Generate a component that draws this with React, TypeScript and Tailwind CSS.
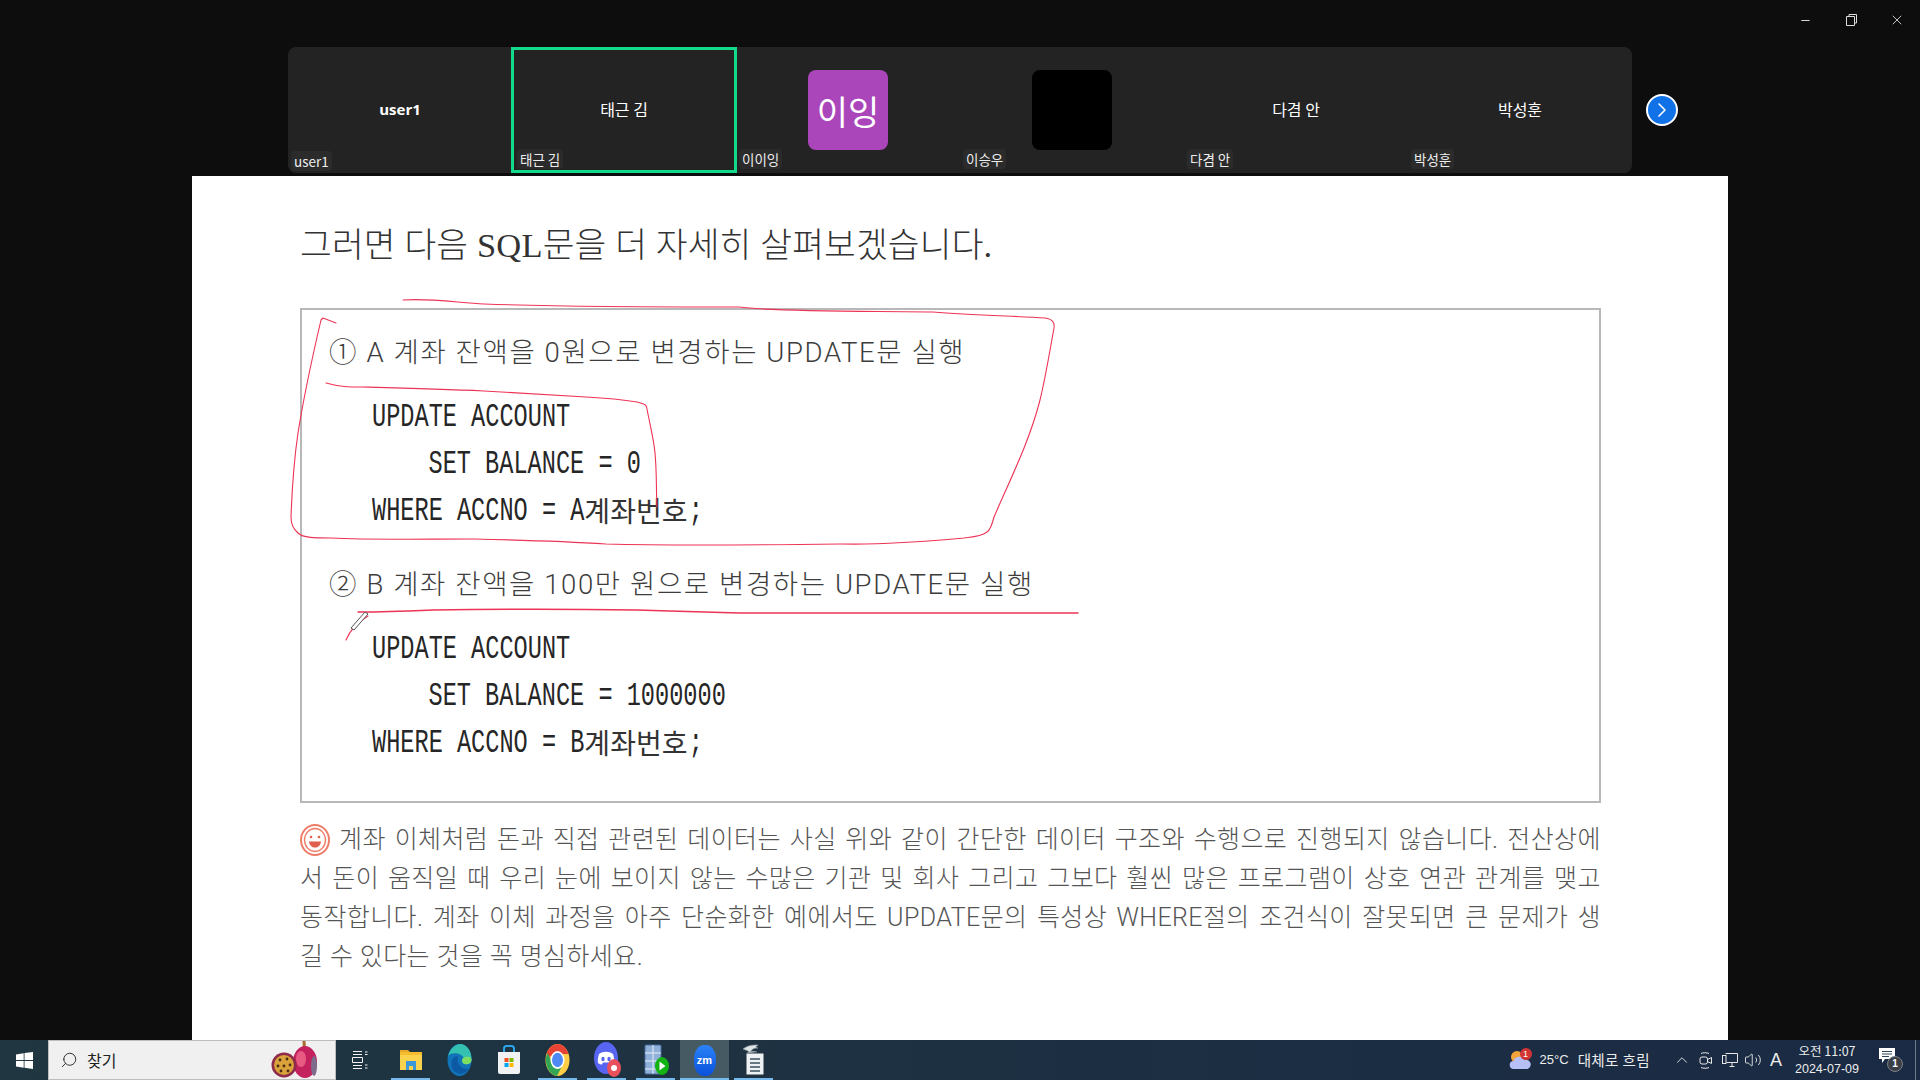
import type { ReactNode } from 'react';
import { ChevronRight, ChevronUp, Minus, Search, Volume2, X } from 'lucide-react';

const tiles = [
  { name: 'user1', label: 'user1', bold: true },
  { name: '태근 김', label: '태근 김', active: true },
  { label: '이이잉', avatar: '이잉', color: 'bg-[#aa46ba]' },
  { label: '이승우', avatar: '', color: 'bg-black' },
  { name: '다겸 안', label: '다겸 안' },
  { name: '박성훈', label: '박성훈' },
];

const kr = "font-['Noto_Sans_CJK_KR',sans-serif]";
const sansKr = "font-['Roboto','Noto_Sans_CJK_KR',sans-serif]";

function Tile({ name, label, bold, active, avatar, color }: (typeof tiles)[number] & { bold?: boolean; active?: boolean; avatar?: string; color?: string; name?: string }) {
  return (
    <div className={`relative h-full flex items-center justify-center text-white ${active ? '-mx-px w-[226px] border-[3px] border-[#13d98a]' : 'w-[224px]'}`}>
      {name && <span className={`-mt-[2px] ${bold ? "text-[15px] font-bold font-['Open_Sans',sans-serif]" : `text-[16px] ${kr}`}`}>{name}</span>}
      {color && (
        <div className={`w-[80px] h-[80px] rounded-lg flex items-center justify-center text-[34px] ${kr} ${color}`}>{avatar}</div>
      )}
      <span className={`absolute left-[3px] px-[3px] h-[20px] leading-[20px] rounded bg-[#2b2b2b] text-[13.5px] text-[#eeeeee] ${bold ? 'bottom-[2px]' : active ? 'bottom-[1px]' : 'bottom-[4px]'} ${kr}`}>
        {label}
      </span>
    </div>
  );
}

function SqlLine({ indent, children }: { indent?: boolean; children: ReactNode }) {
  return (
    <div className={`h-[47px] flex items-center whitespace-pre origin-left scale-x-[0.715] text-[33px] text-[#262626] font-['Liberation_Mono','Noto_Sans_CJK_KR',monospace] ${indent ? 'pl-[79px]' : ''}`}>
      {children}
    </div>
  );
}

// 영문만 좁게 찌그러뜨리므로 한글은 되돌린다
function Hangul({ children }: { children: ReactNode }) {
  return (
    <span className={`inline-block w-[146px] -mt-[3px] origin-left scale-x-[1.4] text-[28px] text-[#333333] ${kr}`}>{children}</span>
  );
}

function StepTitle({ children }: { children: ReactNode }) {
  return <div className={`h-[46px] flex items-center whitespace-pre text-[27.5px] font-light tracking-[1.6px] text-[#3d3d3d] ${sansKr}`}>{children}</div>;
}

function BodyLine({ children, last }: { children: ReactNode; last?: boolean }) {
  return (
    <div className={`h-[39px] leading-[39px] whitespace-nowrap ${last ? '' : 'flex justify-between'}`}>{children}</div>
  );
}

// 줄 양끝 맞춤: 단어를 flex 로 벌린다
function Words({ text }: { text: string }) {
  return (
    <>
      {text.split(' ').map((w, i) => (
        <span key={i}>{w}</span>
      ))}
    </>
  );
}

function Annotations() {
  return (
    <svg className="absolute left-0 top-0 w-[1536px] h-[864px] pointer-events-none" viewBox="192 176 1536 864" fill="none">
      <g stroke="#ee3355" strokeWidth="1.1" strokeLinecap="round" strokeLinejoin="round">
        <path d="M403 300C430 298 460 303 484 304C570 307 660 307 739 307C780 312 860 311 933 312C970 315 1010 316 1045 318C1052 319 1055 322 1054 328C1050 350 1045 380 1040 400C1030 440 1010 480 994 517C992 525 990 530 987 532C980 537 972 537 964 538C920 542 880 545 841 544C760 545 680 546 606 544C560 541 520 540 474 539C420 539 370 540 331 538C315 538 303 538 298 533C292 528 291 522 291 517C292 490 294 460 298 433C304 395 314 350 321 320L323 318L336 323" />
        <path d="M326 383C340 387 350 387 362 387C400 388 440 389 484 391C520 393 555 395 586 397C605 398 625 400 637 402C645 404 647 405 647 409C650 425 654 440 655 453C657 475 656 490 657 507" />
        <path d="M358 612C390 612 410 611 433 610C500 609 570 609 637 610C670 611 700 612 739 613C850 613 960 613 1078 613" strokeWidth="1.5" />
        <path d="M368 616C358 622 350 630 346 640" />
      </g>
      <path d="M351 628L365 612L368 614L354 630Z" fill="#fff" stroke="#555" strokeWidth="1" />
    </svg>
  );
}

function SmileStamp() {
  return (
    <svg className="inline-block w-[30px] h-[32px] mr-[9px]" viewBox="0 0 30 32" fill="none">
      <ellipse cx="15" cy="16" rx="14" ry="15" stroke="#ee7d68" strokeWidth="2" />
      <ellipse cx="15" cy="16" rx="10.5" ry="11.5" stroke="#ee7d68" strokeWidth="1.4" />
      <circle cx="11" cy="13" r="1.3" fill="#e0604e" />
      <circle cx="19" cy="13" r="1.3" fill="#e0604e" />
      <path d="M9 17.5h12c-.5 4-3 6-6 6s-5.500-2-6-6Z" fill="#e0604e" />
    </svg>
  );
}

function TaskIcon({ children, open, active }: { children: ReactNode; open?: boolean; active?: boolean }) {
  return (
    <div className={`relative w-[49px] h-full flex items-center justify-center ${active ? 'bg-[#465a64]' : ''}`}>
      {children}
      {open && <div className={`absolute bottom-0 h-[2px] bg-[#76b9ed] ${active ? 'inset-x-0' : 'inset-x-[5px]'}`} />}
    </div>
  );
}

function WindowsLogo() {
  return (
    <svg width="17" height="17" viewBox="0 0 17 17" fill="#fff">
      <path d="M0 2.400 7.700 1.200V8H0ZM8.500 1.100 17 0V8H8.500ZM0 9H7.700V15.800L0 14.600ZM8.500 9H17V17L8.500 15.800Z" />
    </svg>
  );
}

function PassionFruit() {
  return (
    <svg className="absolute right-[15px] bottom-[1px]" width="50" height="38" viewBox="0 0 50 38">
      <path d="M33 10l-.5-9h3l.5 9Z" fill="#a86b2d" />
      <ellipse cx="35" cy="22" rx="12" ry="16" fill="#c3225f" />
      <ellipse cx="31" cy="19" rx="5" ry="8" fill="#e95a83" />
      <ellipse cx="44" cy="26" rx="3" ry="10" fill="#7d6c8c" />
      <circle cx="14" cy="25" r="12.500" fill="#8f2b4a" />
      <circle cx="14" cy="25" r="10" fill="#d9a23a" />
      <g fill="#4b2b14">
        <circle cx="10" cy="20" r="1.400" /><circle cx="17" cy="19" r="1.400" /><circle cx="20" cy="25" r="1.400" />
        <circle cx="8" cy="26" r="1.400" /><circle cx="14" cy="26" r="1.400" /><circle cx="11" cy="31" r="1.400" /><circle cx="18" cy="31" r="1.400" />
      </g>
    </svg>
  );
}

function TaskView() {
  return (
    <svg className="-ml-[3px]" width="16" height="18" viewBox="0 0 16 18" fill="none" stroke="#f2f2f2" strokeWidth="1">
      <path d="M1 .5h9M1 3.500h9M1 14.500h9M1 17.500h9M.5 6.500h10v5H.5ZM13 1h2.500M13 3.500h2.500M13 14h2.500M13 17h2.500" />
    </svg>
  );
}

function Explorer() {
  return (
    <svg width="24" height="24" viewBox="0 0 24 24">
      <path d="M1 2h8l2 2H1Z" fill="#e8a92b" />
      <rect x="1" y="4" width="22" height="18" fill="#fbd24e" />
      <rect x="1" y="4" width="22" height="3" fill="#f5bc30" />
      <path d="M7 13h10v9h-3v-4h-4v4H7Z" fill="#3c97d8" />
    </svg>
  );
}

function Edge() {
  return (
    <svg width="25" height="32" viewBox="0 0 25 32">
      <ellipse cx="12.500" cy="16" rx="12" ry="16" fill="#1173b8" />
      <path d="M1 13C3 3 10 0 13 0c7 0 12 7 11.500 16-.3 4-4 5-7 4-3-1-3-5-1-6-1-5-14-7-15.500-1Z" fill="#35c1b1" />
      <path d="M16.500 14c2-2 8-2 8 2 0 3-3 5-7 4-3-1-3-5-1-6Z" fill="#7ede62" />
      <path d="M6 26c-4-8 0-14 5-14-2 6 2 14 11 13-4 6-12 6-16 1Z" fill="#0c59a4" />
    </svg>
  );
}

function Store() {
  return (
    <svg width="24" height="30" viewBox="0 0 24 30">
      <path d="M7 8V3.500C7 2 8 1 9.500 1h5C16 1 17 2 17 3.500V8" fill="none" stroke="#2aa6e8" strokeWidth="2" />
      <path d="M1 7h22v20a2 2 0 0 1-2 2H3a2 2 0 0 1-2-2Z" fill="#f0f2f3" />
      <rect x="7.500" y="13" width="4" height="4" fill="#f25022" />
      <rect x="12.500" y="13" width="4" height="4" fill="#7fba00" />
      <rect x="7.500" y="18" width="4" height="4" fill="#00a4ef" />
      <rect x="12.500" y="18" width="4" height="4" fill="#ffb900" />
    </svg>
  );
}

function Chrome() {
  return (
    <svg width="25" height="32" viewBox="0 0 25 32">
      <ellipse cx="12.500" cy="16" rx="12" ry="16" fill="#ffce44" />
      <path d="M1.500 9.500C4 3.500 8 0 12.500 0c5 0 9 3.500 11 10H12.500C9 10 5 11 3.500 15Z" fill="#e94335" />
      <path d="M1 13c-1 10 4 18 11 19l5-10c-3 2-7 1-9-2L2.500 9Z" fill="#33a653" />
      <ellipse cx="12.500" cy="16" rx="7" ry="9" fill="#fff" />
      <ellipse cx="12.500" cy="16" rx="5.500" ry="7.200" fill="#4f89f4" />
    </svg>
  );
}

function Discord() {
  return (
    <svg className="ml-[3px]" width="30" height="36" viewBox="0 0 30 36">
      <ellipse cx="13" cy="16" rx="12" ry="16" fill="#5865f2" />
      <path d="M6 12c4-3 10-3 14 0 1 3 1.500 6 1 9-1.500 1-3 1.500-4 1.500l-1-2h-6l-1 2c-1 0-2.500-.5-4-1.500-.5-3 0-6 1-9Z" fill="#fff" />
      <ellipse cx="10" cy="17" rx="1.700" ry="2.200" fill="#5865f2" />
      <ellipse cx="16" cy="17" rx="1.700" ry="2.200" fill="#5865f2" />
      <ellipse cx="21" cy="26" rx="7" ry="9" fill="#e8505b" />
      <circle cx="21" cy="26" r="3" fill="#fff" />
    </svg>
  );
}

function Sheet() {
  return (
    <svg width="28" height="32" viewBox="0 0 28 32">
      <rect x="3" y="1" width="16" height="29" rx="1" fill="#8fb0d8" stroke="#47689a" />
      <path d="M3 9h16M3 17h16M3 25h16M11 1v29" stroke="#e6eef8" />
      <ellipse cx="20" cy="22" rx="7" ry="9" fill="#12b312" />
      <path d="M17.500 17.500v9l6-4.500Z" fill="#fff" />
    </svg>
  );
}

function ZoomApp() {
  return (
    <div className="w-[22px] h-[31px] rounded-[45%] bg-gradient-to-b from-[#2b82f6] to-[#0c50dc] flex items-center justify-center text-white text-[11px] font-bold font-['Liberation_Sans',sans-serif]">
      zm
    </div>
  );
}

function Notes() {
  return (
    <svg width="28" height="32" viewBox="0 0 28 32">
      <path d="M6 9h18v22H6Z" fill="#eef1f3" stroke="#26353d" />
      <path d="M10 15h10M10 19h10M10 23h10M10 27h10" stroke="#39505c" strokeWidth="1.500" />
      <path d="M3 5c5-4 10-4 15-4-3 2-2 3 0 3-5 0-7 2-8 5-2-3-5-3-7-4Zm4 4c3-2 7-2 10-1" fill="#dfe4e6" stroke="#8d9aa0" strokeWidth=".7" />
    </svg>
  );
}

function Weather() {
  return (
    <div className="relative w-[22px] h-[20px]">
      <svg width="23" height="20" viewBox="0 0 23 20">
        <circle cx="8" cy="7" r="6" fill="#f4a23c" />
        <path d="M5 19a4 4 0 0 1-.500-8 6 6 0 0 1 11-1 4.500 4.500 0 0 1 3 9Z" fill="#b7bff7" />
      </svg>
      <div className="absolute -top-[2px] left-[11px] w-[12px] h-[12px] rounded-full bg-[#d23434] text-white text-[9px] leading-[12px] text-center font-['Liberation_Sans',sans-serif]">1</div>
    </div>
  );
}

function MeetIcon() {
  return (
    <svg width="13" height="17" viewBox="0 0 13 17" fill="none" stroke="#e8e8e8">
      <path d="M2 1.500C3.500.5 8 .5 10 1.500M2 15.500c2 1 6 1 8 0" />
      <rect x="1" y="5" width="7.500" height="7" rx="2" />
      <path d="M8.500 7.500 12.500 5.500v6l-4-2" />
    </svg>
  );
}

function NetworkIcon() {
  return (
    <svg width="16" height="14" viewBox="0 0 16 14" fill="none" stroke="#e8e8e8">
      <path d="M3.500.5h12v9h-11M7.500 13.500h5M10 9.500v4" />
      <rect x=".5" y="2.500" width="3.500" height="8" fill="#1a2a44" />
    </svg>
  );
}

function Notify() {
  return (
    <div className="relative w-[24px] h-[24px]">
      <svg width="17" height="16" viewBox="0 0 17 16" fill="#fff">
        <path d="M0 0h16v11H6l-3 4v-4H0Z" />
        <path d="M3 3.500h10M3 6h10M3 8.500h7" stroke="#33475a" strokeWidth="1" />
      </svg>
      <div className="absolute bottom-0 right-0 w-[16px] h-[16px] rounded-full bg-[#3a3f45] border border-[#7b8086] text-white text-[10px] leading-[14px] text-center font-bold font-['Liberation_Sans',sans-serif]">1</div>
    </div>
  );
}

export default function App() {
  return (
    <div className="w-[1920px] h-[1080px] flex flex-col overflow-hidden bg-[#0d0d0d]">
      {/* Window buttons */}
      <div className="absolute top-0 right-0 h-[40px] flex items-center text-[#dcdcdc]">
        <div className="w-[46px] flex justify-center"><Minus size={13} strokeWidth={1.8} /></div>
        <div className="w-[46px] flex justify-center">
          <svg width="11" height="12" viewBox="0 0 11 12" fill="none" stroke="currentColor">
            <path d="M3 2.500V.5h7.500V9H8.500M.5 2.500h8v9h-8Z" />
          </svg>
        </div>
        <div className="w-[46px] flex justify-center"><X size={16} strokeWidth={1.3} /></div>
      </div>

      {/* Participants strip */}
      <div className="h-[176px] shrink-0 pt-[47px] pl-[288px] flex items-start">
        <div className="h-[126px] w-[1344px] flex rounded-lg bg-[#232323]">
          {tiles.map((t) => (
            <Tile key={t.label} {...t} />
          ))}
        </div>
        <button className="ml-[14px] mt-[47px] w-[32px] h-[32px] rounded-full bg-[#1172e8] border-[2px] border-white flex items-center justify-center text-white">
          <ChevronRight size={24} strokeWidth={1.6} />
        </button>
      </div>

      {/* Shared page */}
      <div className="relative mx-[192px] flex-1 bg-white pl-[108px] pr-[127px] pt-[50px]">
        <h1 className="h-[40px] flex items-center text-[34.5px] tracking-[0.15px] text-[#333333] font-light font-['Liberation_Serif','Noto_Sans_CJK_KR',serif] whitespace-pre">
          그러면 다음 SQL문을 더 자세히 살펴보겠습니다.
        </h1>

        <div className="mt-[42px] h-[495px] border-[2px] border-[#b8b8b8] pl-[27px] pt-[20px]">
          <StepTitle>① A 계좌 잔액을 0원으로 변경하는 UPDATE문 실행</StepTitle>
          <div className="mt-[18px] pl-[43px]">
            <SqlLine>UPDATE ACCOUNT</SqlLine>
            <SqlLine indent>SET BALANCE = 0</SqlLine>
            <SqlLine>WHERE ACCNO = A<Hangul>계좌번호</Hangul>;</SqlLine>
          </div>
          <div className="mt-[27px]">
            <StepTitle>② B 계좌 잔액을 100만 원으로 변경하는 UPDATE문 실행</StepTitle>
          </div>
          <div className="mt-[18px] pl-[43px]">
            <SqlLine>UPDATE ACCOUNT</SqlLine>
            <SqlLine indent>SET BALANCE = 1000000</SqlLine>
            <SqlLine>WHERE ACCNO = B<Hangul>계좌번호</Hangul>;</SqlLine>
          </div>
        </div>

        <div className={`mt-[17px] text-[25px] font-light tracking-[0.4px] text-[#555555] ${sansKr}`}>
          <BodyLine>
            <span className="flex items-center"><SmileStamp /><span>계좌</span></span>
            <Words text="이체처럼 돈과 직접 관련된 데이터는 사실 위와 같이 간단한 데이터 구조와 수행으로 진행되지 않습니다. 전산상에" />
          </BodyLine>
          <BodyLine>
            <Words text="서 돈이 움직일 때 우리 눈에 보이지 않는 수많은 기관 및 회사 그리고 그보다 훨씬 많은 프로그램이 상호 연관 관계를 맺고" />
          </BodyLine>
          <BodyLine>
            <Words text="동작합니다. 계좌 이체 과정을 아주 단순화한 예에서도 UPDATE문의 특성상 WHERE절의 조건식이 잘못되면 큰 문제가 생" />
          </BodyLine>
          <BodyLine last>길 수 있다는 것을 꼭 명심하세요.</BodyLine>
        </div>

        <Annotations />
      </div>

      {/* Windows taskbar */}
      <div className={`h-[40px] shrink-0 flex items-center bg-gradient-to-r from-[#203640] to-[#1a2a44] text-[#ececec] ${kr}`}>
        <div className="w-[48px] h-full flex items-center justify-center"><WindowsLogo /></div>
        <div className="relative w-[288px] h-full bg-[#f0f0f0] border border-[#bdbdbd] flex items-center pl-[11px] text-[#222222] text-[16px]">
          <Search size={18} strokeWidth={1.2} className="-scale-x-100" />
          <span className="ml-[9px]">찾기</span>
          <PassionFruit />
        </div>
        <div className="w-[50px] h-full flex items-center justify-center"><TaskView /></div>
        <TaskIcon open><Explorer /></TaskIcon>
        <TaskIcon><Edge /></TaskIcon>
        <TaskIcon><Store /></TaskIcon>
        <TaskIcon open><Chrome /></TaskIcon>
        <TaskIcon open><Discord /></TaskIcon>
        <TaskIcon open><Sheet /></TaskIcon>
        <TaskIcon open active><ZoomApp /></TaskIcon>
        <TaskIcon open><Notes /></TaskIcon>

        <div className="ml-auto flex items-center h-full">
          <Weather />
          <span className="ml-[9px] text-[13px] font-['Liberation_Sans',sans-serif]">25°C</span>
          <span className="ml-[9px] text-[14.5px] tracking-[0.4px]">대체로 흐림</span>
          <ChevronUp size={18} strokeWidth={1.2} className="ml-[23px]" />
          <div className="ml-[8px]"><MeetIcon /></div>
          <div className="ml-[10px]"><NetworkIcon /></div>
          <Volume2 size={18} strokeWidth={1.2} className="ml-[6px]" />
          <span className="ml-[8px] text-[18px] font-['Liberation_Sans',sans-serif]">A</span>
          <div className="ml-[12px] w-[66px] text-center text-[12.5px] leading-[18px]">
            <div>오전 11:07</div>
            <div className="font-['Liberation_Sans',sans-serif]">2024-07-09</div>
          </div>
          <div className="ml-[19px]"><Notify /></div>
          <div className="ml-[12px] w-[5px] h-full border-l border-[#6c7a8a]" />
        </div>
      </div>
    </div>
  );
}
